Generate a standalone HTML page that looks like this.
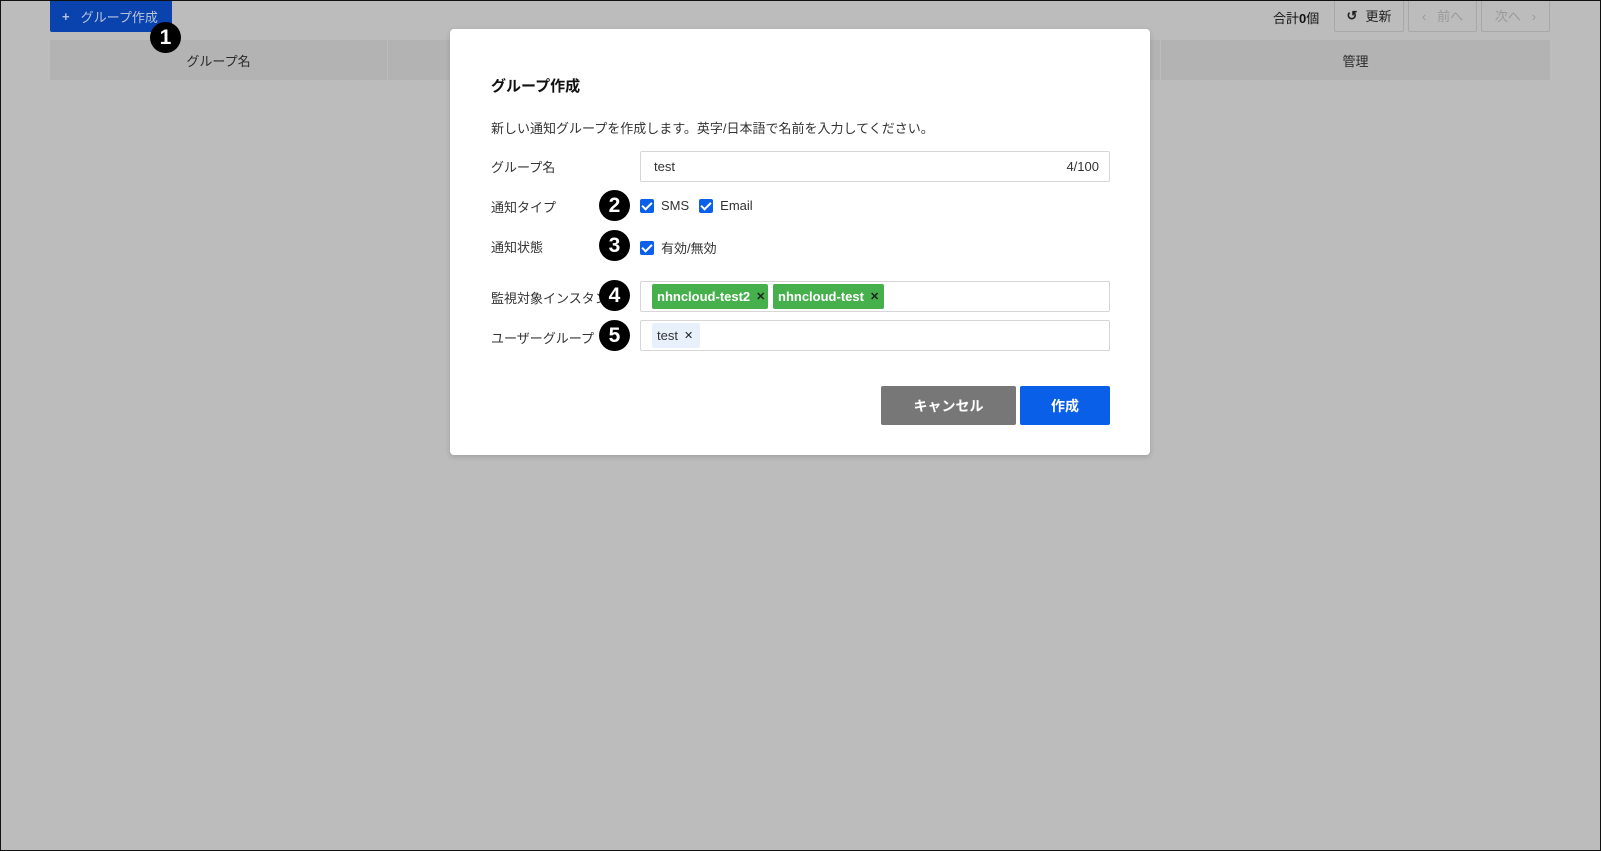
<!DOCTYPE html>
<html><head><meta charset="utf-8"><style>
*{box-sizing:border-box;margin:0;padding:0}
body{width:1601px;height:851px;background:#bcbcbc;position:relative;overflow:hidden;font-family:"Liberation Sans","Noto Sans CJK JP",sans-serif;color:#333;font-size:13px}
.frame{position:absolute;left:0;top:0;width:1601px;height:851px;border:1px solid #111;pointer-events:none}
.abs{position:absolute}
.topbtn{left:50px;top:0;width:122px;height:32px;background:#0a43ad;color:#b9c4da;font-size:13px;display:flex;align-items:center;padding-left:12px;border-radius:0 0 2px 2px}
.th{top:40px;height:40px;background:#b3b3b3;display:flex;align-items:center;justify-content:center;color:#2a2a2a;font-size:13px}
.gbtn{top:0;height:32px;border:1px solid #a8a8a8;border-top:none;display:flex;align-items:center;justify-content:center;font-size:13px;border-radius:0 0 2px 2px}
.modal{left:450px;top:29px;width:700px;height:426px;background:#fff;border-radius:4px;box-shadow:0 2px 6px rgba(0,0,0,.15)}
.lbl{left:491px;font-size:13px;color:#333;line-height:16px}
.inp{left:640px;width:470px;border:1px solid #d6d6d6;border-radius:2px;background:#fff}
.cb{width:14px;height:14px;background:#0b5fe8;border-radius:2px;display:inline-block;position:relative}
.cb:after{content:"";position:absolute;left:4px;top:1.5px;width:4px;height:8px;border:solid #fff;border-width:0 2px 2px 0;transform:rotate(45deg)}
.badge{width:31px;height:31px;border-radius:50%;background:#000;color:#fff;font-weight:bold;font-size:21px;display:flex;align-items:center;justify-content:center}
.tag{top:2px;height:25px;background:#46b14c;color:#fff;font-weight:bold;font-size:13px;display:flex;align-items:center;padding-left:5px;border-radius:2px}
.tag span{color:#222;font-size:11px;margin-left:6px}
</style></head><body>
<div class="abs topbtn"><span style="font-weight:bold;margin-right:11px">+</span>グループ作成</div>
<div class="abs th" style="left:50px;width:337px">グループ名</div>
<div class="abs th" style="left:388px;width:772px"></div>
<div class="abs th" style="left:1161px;width:389px">管理</div>
<div class="abs" style="left:1273px;top:8px;font-size:13px;color:#111">合計<b>0</b>個</div>
<div class="abs gbtn" style="left:1334px;width:70px;color:#222"><span style="font-weight:bold;margin-right:8px">↺</span>更新</div>
<div class="abs gbtn" style="left:1408px;width:69px;color:#9a9a9a">‹&nbsp;&nbsp;&nbsp;前へ</div>
<div class="abs gbtn" style="left:1481px;width:69px;color:#9a9a9a">次へ&nbsp;&nbsp;&nbsp;›</div>

<div class="abs modal"></div>
<div class="abs" style="left:491px;top:75px;font-size:15px;font-weight:bold;color:#111">グループ作成</div>
<div class="abs lbl" style="top:121px">新しい通知グループを作成します。英字/日本語で名前を入力してください。</div>
<div class="abs lbl" style="top:160px">グループ名</div>
<div class="abs inp" style="top:151px;height:31px"><span class="abs" style="left:13px;top:7px">test</span><span class="abs" style="right:10px;top:7px">4/100</span></div>
<div class="abs lbl" style="top:200px">通知タイプ</div>
<div class="abs" style="left:640px;top:198px;display:flex;align-items:center;font-size:13px"><i class="cb"></i><span style="margin:0 10px 0 7px">SMS</span><i class="cb"></i><span style="margin-left:7px">Email</span></div>
<div class="abs lbl" style="top:240px">通知状態</div>
<div class="abs" style="left:640px;top:238px;display:flex;align-items:center;font-size:13px"><i class="cb"></i><span style="margin-left:7px">有効/無効</span></div>
<div class="abs lbl" style="top:291px">監視対象インスタンス</div>
<div class="abs inp" style="top:281px;height:31px">
<div class="abs tag" style="left:11px;width:116px">nhncloud-test2<span>✕</span></div>
<div class="abs tag" style="left:132px;width:111px">nhncloud-test<span>✕</span></div>
</div>
<div class="abs lbl" style="top:331px">ユーザーグループ</div>
<div class="abs inp" style="top:320px;height:31px">
<div class="abs tag" style="left:11px;width:48px;background:#e8f0fc;color:#333;font-weight:normal">test<span>✕</span></div>
</div>
<div class="abs" style="left:881px;top:386px;width:135px;height:39px;background:#777;color:#fff;font-weight:bold;font-size:14px;display:flex;align-items:center;justify-content:center;border-radius:2px">キャンセル</div>
<div class="abs" style="left:1020px;top:386px;width:90px;height:39px;background:#0a5fe8;color:#fff;font-weight:bold;font-size:14px;display:flex;align-items:center;justify-content:center;border-radius:2px">作成</div>

<div class="abs badge" style="left:150px;top:22px">1</div>
<div class="abs badge" style="left:599px;top:190px">2</div>
<div class="abs badge" style="left:599px;top:230px">3</div>
<div class="abs badge" style="left:599px;top:280px">4</div>
<div class="abs badge" style="left:599px;top:320px">5</div>
<div class="frame"></div>
</body></html>
